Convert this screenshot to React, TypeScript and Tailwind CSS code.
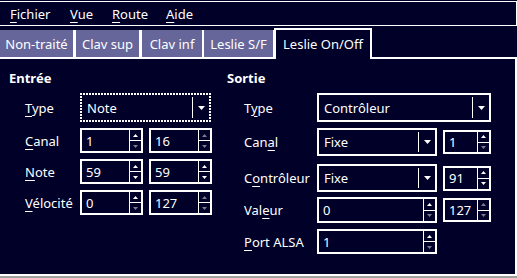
import React from 'react';

const Up = ({ on }: { on: boolean }) => (
  <svg width="5" height="3" viewBox="0 0 5 3">
    <polygon points="0,3 5,3 2.5,0" fill={on ? '#ffffff' : '#7c7c90'} />
  </svg>
);

const Down = ({ on }: { on: boolean }) => (
  <svg width="5" height="3" viewBox="0 0 5 3">
    <polygon points="0,0 5,0 2.5,3" fill={on ? '#ffffff' : '#7c7c90'} />
  </svg>
);

// mnemonic label: underline one letter
const Mn = ({ pre = '', u, post = '' }: { pre?: string; u: string; post?: string }) => (
  <span>
    {pre}
    <span className="underline underline-offset-[3px] decoration-1">{u}</span>
    {post}
  </span>
);

const Spin = ({
  value,
  w,
  h,
  up = true,
  down = true,
}: {
  value: string;
  w: string;
  h: string;
  up?: boolean;
  down?: boolean;
}) => (
  <div className={`${w} ${h} flex border-2 border-white`}>
    <div className="flex flex-1 items-center pl-[4px]">{value}</div>
    <div className="flex w-[12px] flex-col border-l border-white">
      <div className="flex flex-1 items-center justify-center border-b border-white">
        <Up on={up} />
      </div>
      <div className="flex flex-1 items-center justify-center">
        <Down on={down} />
      </div>
    </div>
  </div>
);

// focus frame: fine dash pattern on all four edges
const focusFrame =
  'p-[2px] [background:repeating-linear-gradient(90deg,#fff_0_2px,transparent_2px_3px)_top/100%_2px_no-repeat,repeating-linear-gradient(90deg,#fff_0_2px,transparent_2px_3px)_bottom/100%_2px_no-repeat,repeating-linear-gradient(180deg,#fff_0_2px,transparent_2px_3px)_left/2px_100%_no-repeat,repeating-linear-gradient(180deg,#fff_0_2px,transparent_2px_3px)_right/2px_100%_no-repeat]';

const Combo = ({
  value,
  w,
  h,
  focus = false,
}: {
  value: string;
  w: string;
  h: string;
  focus?: boolean;
}) => (
  <div className={`${w} ${h} flex ${focus ? focusFrame : 'border-2 border-white'}`}>
    <div className="flex flex-1 items-center pl-[5px]">{value}</div>
    <div className="my-[2px] w-px bg-white" />
    <div className="flex w-[16px] items-center justify-center">
      <svg width="7" height="4" viewBox="0 0 7 4">
        <polygon points="0,0 7,0 3.5,4" fill="#ffffff" />
      </svg>
    </div>
  </div>
);

export default function App() {
  return (
    <div
      className="relative h-[278px] w-[517px] overflow-hidden bg-[#000028] text-[13px] leading-[18px] text-white"
      style={{ fontFamily: '"Noto Sans", "DejaVu Sans", sans-serif' }}
    >
      {/* menu bar */}
      <div className="mt-[1px] flex h-[25px] items-center border-y border-r border-white">
        <div className="w-[70px] pl-[10px]">
          <Mn u="F" post="ichier" />
        </div>
        <div className="w-[42px]">
          <Mn u="V" post="ue" />
        </div>
        <div className="w-[54px]">
          <Mn u="R" post="oute" />
        </div>
        <div>
          <Mn u="A" post="ide" />
        </div>
      </div>

      {/* tabs */}
      <div className="flex h-[31px] items-end">
        <div className="flex h-[27px] w-[76px] items-center justify-center border-r-[3px] border-white bg-[#66669a]">
          Non-traité
        </div>
        <div className="flex h-[27px] w-[66px] items-center justify-center border-r-[3px] border-white bg-[#66669a]">
          Clav sup
        </div>
        <div className="flex h-[27px] w-[62px] items-center justify-center border-r-[2px] border-white bg-[#66669a]">
          Clav inf
        </div>
        <div className="flex h-[27px] w-[70px] items-center justify-center border-r border-white bg-[#66669a]">
          Leslie S/F
        </div>
        <div className="relative z-10 -mb-[2px] flex h-[31px] w-[98px] items-center justify-center border-x-2 border-t-2 border-white bg-[#000028] pb-[2px]">
          Leslie On/Off
        </div>
      </div>

      {/* pane */}
      <div className="flex h-[219px] border-y-2 border-r-2 border-white">
        {/* Entrée */}
        <div className="w-[227px] pl-[9px] pt-[10px]">
          <div className="font-bold">Entrée</div>
          <div className="mt-[6px] flex h-[29px] items-center">
            <div className="w-[71px] pl-[16px]">
              <Mn u="T" post="ype" />
            </div>
            <Combo value="Note" w="w-[131px]" h="h-[29px]" focus />
          </div>
          <div className="mt-[6px] flex h-[25px] items-center">
            <div className="w-[71px] pl-[16px]">
              <Mn u="C" post="anal" />
            </div>
            <div className="flex gap-[6px]">
              <Spin value="1" w="w-[63px]" h="h-[25px]" down={false} />
              <Spin value="16" w="w-[63px]" h="h-[25px]" up={false} down={false} />
            </div>
          </div>
          <div className="mt-[6px] flex h-[25px] items-center">
            <div className="w-[71px] pl-[16px]">
              <Mn u="N" post="ote" />
            </div>
            <div className="flex gap-[6px]">
              <Spin value="59" w="w-[63px]" h="h-[25px]" />
              <Spin value="59" w="w-[63px]" h="h-[25px]" />
            </div>
          </div>
          <div className="mt-[6px] flex h-[25px] items-center">
            <div className="w-[71px] pl-[16px]">
              <Mn u="V" post="élocité" />
            </div>
            <div className="flex gap-[6px]">
              <Spin value="0" w="w-[63px]" h="h-[25px]" down={false} />
              <Spin value="127" w="w-[63px]" h="h-[25px]" up={false} down={false} />
            </div>
          </div>
        </div>

        {/* Sortie */}
        <div className="flex-1 pt-[10px]">
          <div className="font-bold">Sortie</div>
          <div className="mt-[6px] flex h-[29px] items-center">
            <div className="w-[90px] pl-[17px]">
              <Mn pre="T" u="y" post="pe" />
            </div>
            <Combo value="Contrôleur" w="w-[174px]" h="h-[29px]" />
          </div>
          <div className="mt-[6px] flex h-[28px] items-center">
            <div className="w-[90px] pl-[17px]">
              <Mn pre="Can" u="a" post="l" />
            </div>
            <div className="flex items-center gap-[6px]">
              <Combo value="Fixe" w="w-[120px]" h="h-[28px]" />
              <Spin value="1" w="w-[48px]" h="h-[24px]" down={false} />
            </div>
          </div>
          <div className="mt-[8px] flex h-[28px] items-center">
            <div className="w-[90px] pl-[17px]">
              <Mn pre="C" u="o" post="ntrôleur" />
            </div>
            <div className="flex items-center gap-[6px]">
              <Combo value="Fixe" w="w-[120px]" h="h-[28px]" />
              <Spin value="91" w="w-[48px]" h="h-[25px]" />
            </div>
          </div>
          <div className="mt-[5px] flex h-[26px] items-center">
            <div className="w-[90px] pl-[17px]">
              <Mn pre="Val" u="e" post="ur" />
            </div>
            <div className="flex items-center gap-[6px]">
              <Spin value="0" w="w-[120px]" h="h-[26px]" down={false} />
              <Spin value="127" w="w-[48px]" h="h-[24px]" up={false} down={false} />
            </div>
          </div>
          <div className="mt-[6px] flex h-[25px] items-center">
            <div className="w-[90px] pl-[17px]">
              <Mn u="P" post="ort ALSA" />
            </div>
            <Spin value="1" w="w-[120px]" h="h-[25px]" down={false} />
          </div>
        </div>
      </div>
      <div className="h-[2px] bg-[#a0a0a0]" />
    </div>
  );
}
